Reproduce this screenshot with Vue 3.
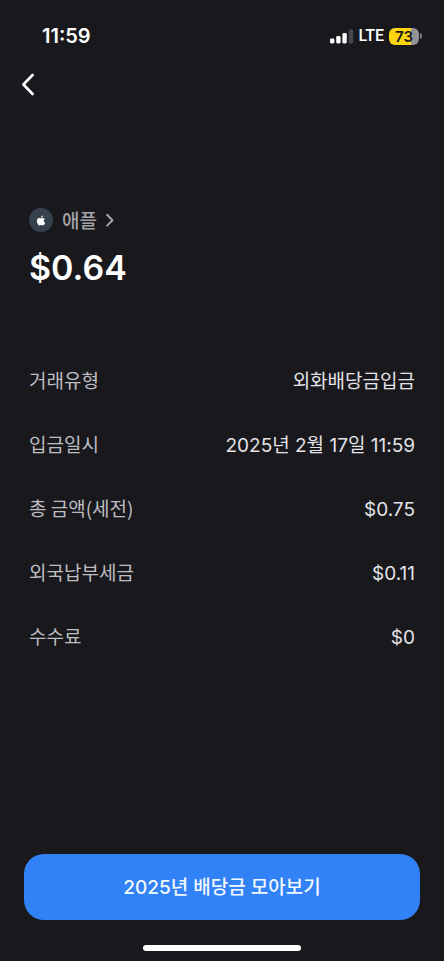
<script setup>
const details = [
  { label: '거래유형', value: '외화배당금입금' },
  { label: '입금일시', value: '2025년 2월 17일 11:59' },
  { label: '총 금액(세전)', value: '$0.75' },
  { label: '외국납부세금', value: '$0.11' },
  { label: '수수료', value: '$0' },
]
</script>

<template>
  <div class="screen">
    <div class="status">
      <span class="clock">11:59</span>
      <div class="indicators">
        <svg class="signal" width="24" height="15" viewBox="0 0 24 15" aria-hidden="true">
          <rect x="0" y="9.5" width="4.4" height="5" rx="1.4" fill="#fff" />
          <rect x="6.2" y="7" width="4.4" height="7.5" rx="1.4" fill="#fff" />
          <rect x="12.4" y="4" width="4.4" height="10.5" rx="1.4" fill="#fff" />
          <rect x="18.8" y="0.5" width="4.4" height="14" rx="1.4" fill="#48484c" />
        </svg>
        <span class="network">LTE</span>
        <div class="battery">
          <span class="cell">73</span>
          <span class="tip"></span>
        </div>
      </div>
    </div>

    <header class="nav">
      <button class="back" type="button" aria-label="뒤로">
        <svg width="16" height="24" viewBox="0 0 16 24" aria-hidden="true">
          <path d="M12.6 3 3.4 12.5l9.2 9.5" fill="none" stroke="#fff" stroke-width="2.6" stroke-linecap="round" stroke-linejoin="round" />
        </svg>
      </button>
    </header>

    <main class="content">
      <a class="stock" href="#">
        <span class="logo">
          <svg width="10" height="11" viewBox="0 0 24 24" aria-hidden="true">
            <path fill="#fff" d="M12.152 6.896c-.948 0-2.415-1.078-3.96-1.04-2.04.027-3.91 1.183-4.961 3.014-2.117 3.675-.546 9.103 1.519 12.09 1.013 1.454 2.208 3.09 3.792 3.039 1.52-.065 2.09-.987 3.935-.987 1.831 0 2.35.987 3.96.948 1.637-.026 2.676-1.48 3.676-2.948 1.156-1.688 1.636-3.325 1.662-3.415-.039-.013-3.182-1.221-3.22-4.857-.026-3.04 2.48-4.494 2.597-4.559-1.429-2.09-3.623-2.324-4.39-2.376-2-.156-3.675 1.09-4.61 1.09zM15.53 3.83c.843-1.012 1.4-2.427 1.245-3.83-1.207.052-2.662.805-3.532 1.818-.78.896-1.454 2.338-1.273 3.714 1.338.104 2.715-.688 3.559-1.701" />
          </svg>
        </span>
        <span class="name">애플</span>
        <svg width="8" height="14" viewBox="0 0 8 14" aria-hidden="true">
          <path d="M1.2 1.8 6.4 7.2l-5.2 5.4" fill="none" stroke="#a3a3a8" stroke-width="2" stroke-linecap="round" stroke-linejoin="round" />
        </svg>
      </a>
      <h1 class="amount">$0.64</h1>

      <dl class="details">
        <div v-for="item in details" :key="item.label" class="row">
          <dt>{{ item.label }}</dt>
          <dd>{{ item.value }}</dd>
        </div>
      </dl>
    </main>

    <footer class="footer">
      <button class="cta" type="button">2025년 배당금 모아보기</button>
      <div class="home"></div>
    </footer>
  </div>
</template>

<style>
body {
  margin: 0;
  background: #19181d;
}
</style>

<style scoped>
.screen {
  display: flex;
  flex-direction: column;
  box-sizing: border-box;
  min-height: 100vh;
  background: #19181d;
  color: #fff;
  font-family: Inter, "Noto Sans CJK KR", sans-serif;
}

.status {
  display: flex;
  align-items: center;
  justify-content: space-between;
  padding: 24px 22px 0 42px;
}

.clock {
  font-size: 20px;
  line-height: 24px;
  font-weight: 600;
}

.indicators {
  display: flex;
  align-items: center;
  gap: 5px;
}

.network {
  font-family: Roboto, sans-serif;
  font-size: 16px;
  line-height: 24px;
  font-weight: 500;
}

.battery {
  display: flex;
  align-items: center;
  gap: 1px;
}

.cell {
  width: 30px;
  border-radius: 6px;
  background: linear-gradient(to right, #fcd50d 73%, #929297 73%);
  color: #19181d;
  font-size: 15px;
  line-height: 17px;
  font-weight: 600;
  text-align: center;
}

.tip {
  width: 2px;
  height: 6px;
  border-radius: 0 2px 2px 0;
  background: #77777b;
}

.nav {
  display: flex;
  padding: 24px 20px 0;
}

.back {
  display: flex;
  padding: 0;
  border: 0;
  background: none;
  cursor: pointer;
}

.content {
  flex: 1;
  padding: 112px 29px 24px;
}

.stock {
  display: flex;
  align-items: center;
  gap: 9px;
  width: fit-content;
  color: #a3a3a8;
  font-size: 19px;
  line-height: 24px;
  font-weight: 500;
  text-decoration: none;
}

.name {
  font-family: "Noto Sans CJK KR", sans-serif;
}

.logo {
  display: flex;
  align-items: center;
  justify-content: center;
  width: 24px;
  height: 24px;
  border-radius: 50%;
  background: #36414e;
}

.amount {
  margin: 12px 0 0;
  font-size: 34px;
  line-height: 48px;
  font-weight: 600;
}

.details {
  display: flex;
  flex-direction: column;
  gap: 34px;
  margin: 74px 0 0;
}

.row {
  display: flex;
  align-items: baseline;
  justify-content: space-between;
  gap: 16px;
  font-size: 19px;
  line-height: 28px;
}

dt {
  color: #bdbdc2;
  font-family: "Noto Sans CJK KR", sans-serif;
}

dd {
  margin: 0;
  color: #e3e3e7;
  text-align: right;
}

.footer {
  display: flex;
  flex-direction: column;
  align-items: center;
  gap: 25px;
  padding: 0 24px 10px;
}

.cta {
  width: 100%;
  padding: 20px 16px 18px;
  border: 0;
  border-radius: 20px;
  background: #3182f6;
  color: #f2f8ff;
  font-family: inherit;
  font-size: 19px;
  line-height: 28px;
  font-weight: 500;
  cursor: pointer;
}

.home {
  width: 40%;
  height: 6px;
  border-radius: 3px;
  background: #fff;
}
</style>
